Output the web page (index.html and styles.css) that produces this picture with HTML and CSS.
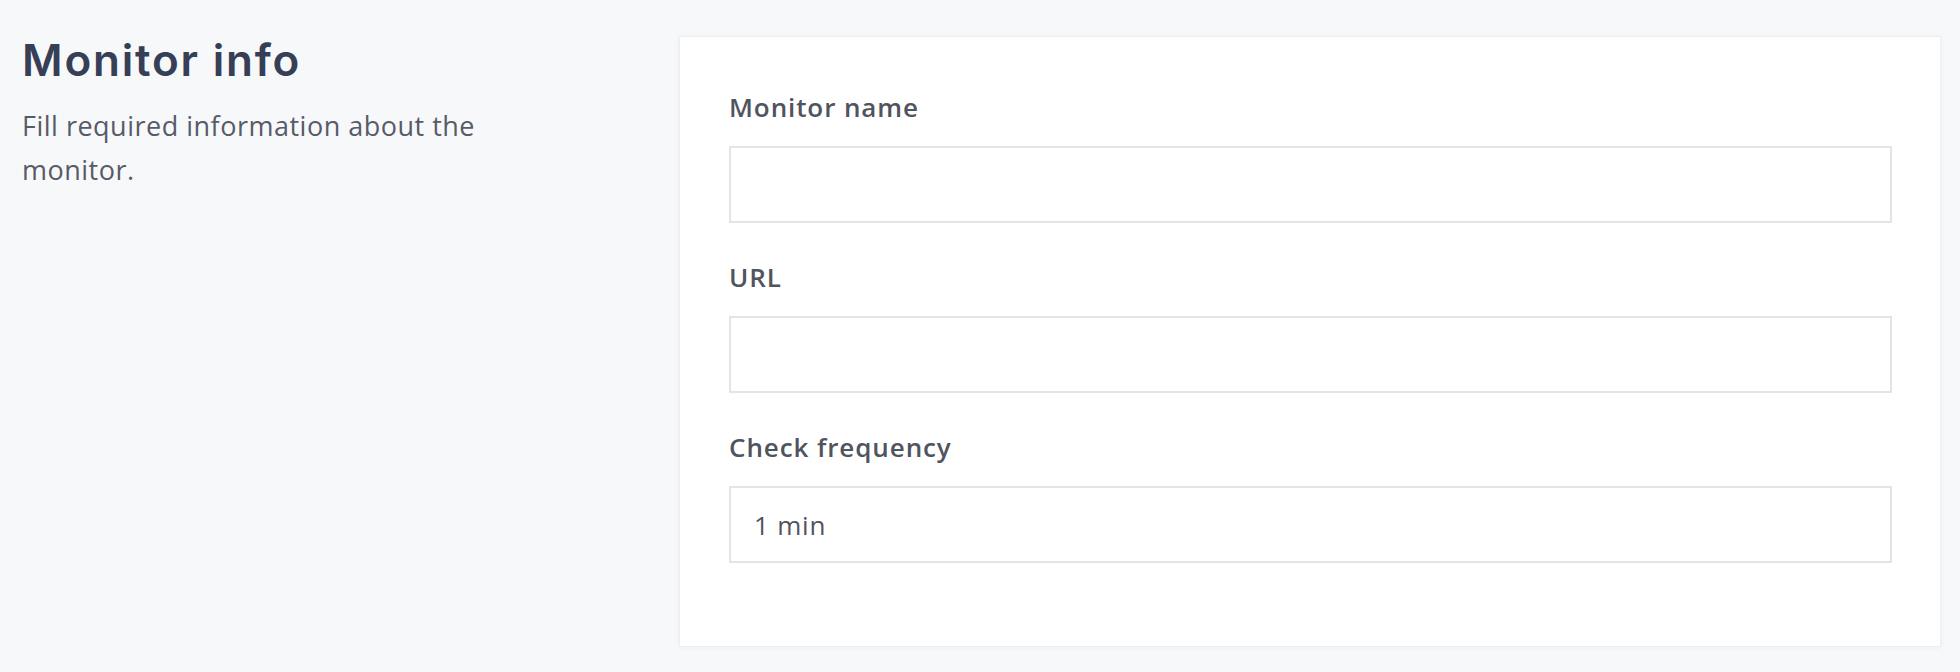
FILE: index.html
```html
<!DOCTYPE html>
<html lang="en">
<head>
<meta charset="utf-8">
<title>Monitor info</title>
<link rel="stylesheet" href="styles.css">
</head>
<body>
<main class="page">
  <section class="intro">
    <h1 class="intro-title">Monitor info</h1>
    <p class="intro-text">Fill required information about the monitor.</p>
  </section>
  <form class="card">
    <div class="field">
      <label class="field-label" for="name">Monitor name</label>
      <input class="field-input" id="name" type="text">
    </div>
    <div class="field">
      <label class="field-label" for="url">URL</label>
      <input class="field-input" id="url" type="text">
    </div>
    <div class="field">
      <label class="field-label" for="freq">Check frequency</label>
      <div class="field-input field-select" id="freq">1 min</div>
    </div>
  </form>
</main>
</body>
</html>
```
FILE: styles.css
```css
* { box-sizing: border-box; }
html, body {
  margin: 0;
  height: 100%;
  background: #f7f8fa;
}
body {
  font-family: "Open Sans", "Noto Sans", sans-serif;
  color: #50545f;
}
.page {
  display: grid;
  grid-template-columns: 604px 1fr;
  column-gap: 53px;
  padding: 36px 19px 0 22px;
  align-items: start;
}
.intro {
  padding-right: 80px;
}
.intro-title {
  margin: 0;
  font-family: "Inter", "Noto Sans", sans-serif;
  font-weight: 600;
  font-size: 44px;
  line-height: 48px;
  color: #363f55;
  letter-spacing: 1.8px;
}
.intro-text {
  margin: 20px 0 0;
  font-size: 27px;
  line-height: 44px;
  letter-spacing: 0.5px;
  color: #575b68;
}
.card {
  background: #fff;
  border: 1px solid #eceef1;
  box-shadow: 0 1px 6px rgba(30, 40, 60, 0.04);
  padding: 48px 48px 83px 49px;
  display: flex;
  flex-direction: column;
  gap: 32px;
}
.field {
  display: flex;
  flex-direction: column;
  gap: 16px;
}
.field-label {
  font-size: 26px;
  line-height: 45px;
  font-weight: 600;
  letter-spacing: 0.9px;
  color: #50545e;
}
.field-input {
  height: 77px;
  border: 2px solid #e3e4e8;
  background: #fff;
  font: inherit;
  font-size: 26px;
  letter-spacing: 0.8px;
  color: #50545e;
  padding: 0 23px;
  outline: none;
  border-radius: 0;
}
.field-select {
  display: flex;
  align-items: center;
}
```
